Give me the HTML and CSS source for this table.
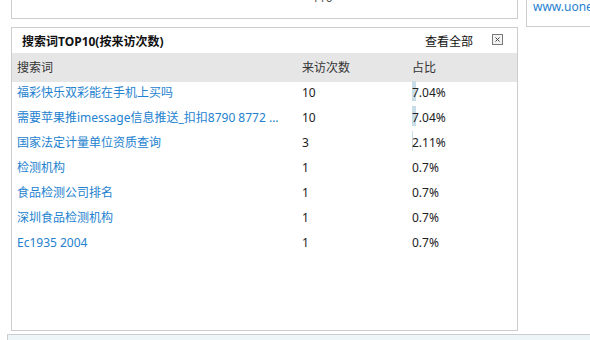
FILE: index.html
```html
<!DOCTYPE html>
<html lang="zh-CN">
<head>
<meta charset="utf-8">
<title>搜索词TOP10</title>
<link rel="stylesheet" href="styles.css">
</head>
<body>
<div class="page">
  <div class="main">
    <div class="left">
      <div class="panel top-panel">
        <div class="axis">110</div>
      </div>
      <div class="panel words">
        <div class="words-head">
          <span class="title">搜索词TOP10(按来访次数)</span>
          <span class="actions">
            <a class="more">查看全部</a>
            <svg class="close" width="11" height="11" viewBox="0 0 11 11">
              <rect x="0.5" y="0.5" width="10" height="10" fill="#f2f2f2" stroke="#7a7a7a"/>
              <path d="M3.5 3.5 L7.5 7.5 M7.5 3.5 L3.5 7.5" stroke="#444" stroke-width="1"/>
            </svg>
          </span>
        </div>
        <div class="table">
          <div class="row th">
            <div>搜索词</div><div>来访次数</div><div>占比</div>
          </div>
          <div class="row">
            <a class="kw">福彩快乐双彩能在手机上买吗</a><div>10</div>
            <div class="pct"><span class="bar" style="width:4px"></span><span class="val">7.04%</span></div>
          </div>
          <div class="row">
            <a class="kw">需要苹果推imessage信息推送_扣扣8790 8772 ...</a><div>10</div>
            <div class="pct"><span class="bar" style="width:4px"></span><span class="val">7.04%</span></div>
          </div>
          <div class="row">
            <a class="kw">国家法定计量单位资质查询</a><div>3</div>
            <div class="pct"><span class="bar" style="width:1px"></span><span class="val">2.11%</span></div>
          </div>
          <div class="row">
            <a class="kw">检测机构</a><div>1</div>
            <div class="pct"><span class="val">0.7%</span></div>
          </div>
          <div class="row">
            <a class="kw">食品检测公司排名</a><div>1</div>
            <div class="pct"><span class="val">0.7%</span></div>
          </div>
          <div class="row">
            <a class="kw">深圳食品检测机构</a><div>1</div>
            <div class="pct"><span class="val">0.7%</span></div>
          </div>
          <div class="row">
            <a class="kw">Ec1935 2004</a><div>1</div>
            <div class="pct"><span class="val">0.7%</span></div>
          </div>
        </div>
      </div>
    </div>
    <div class="panel side">
      <a class="site">www.uonet.com.cn</a>
    </div>
  </div>
  <div class="footer-bar"></div>
</div>
</body>
</html>
```

FILE: styles.css
```css
html, body {
  margin: 0;
  padding: 0;
  background: #fff;
  overflow: hidden;
}
body {
  font-family: "Noto Sans", "Noto Sans CJK SC", sans-serif;
  font-size: 12px;
  color: #222;
  width: 590px;
  height: 340px;
}
.page {
  display: flex;
  flex-direction: column;
}
.main {
  display: flex;
  gap: 8px;
  padding-left: 11px;
  margin-top: -30px;
  align-items: flex-start;
}
.left {
  width: 507px;
  display: flex;
  flex-direction: column;
  gap: 8px;
}
.panel {
  border: 1px solid #cdcdcd;
  background: #fff;
  box-sizing: border-box;
}
.top-panel {
  height: 49px;
}
.axis {
  margin-top: 19px;
  padding-left: 300px;
  line-height: 16px;
  color: #555;
}
.words {
  height: 304px;
}
.words-head {
  display: flex;
  justify-content: space-between;
  align-items: center;
  height: 25px;
  padding: 0 14px 0 10px;
}
.title {
  font-weight: bold;
  color: #111;
}
.actions {
  display: flex;
  align-items: center;
  gap: 19px;
}
.more {
  color: #111;
}
.close {
  display: block;
  margin-top: -3px;
}
.table {
  display: flex;
  flex-direction: column;
}
.row {
  display: grid;
  grid-template-columns: 285px 110px 1fr;
  padding-left: 5px;
  height: 25px;
  align-items: center;
  line-height: 16px;
}
.row > * {
  margin-top: -4px;
}
.row.th {
  background: #e6e6e6;
  height: 29px;
  color: #333;
}
.row.th > * {
  margin-top: 0;
}
.kw {
  color: #2381cf;
  white-space: nowrap;
  overflow: hidden;
}
.pct {
  position: relative;
}
.bar {
  position: absolute;
  left: 0;
  top: -4px;
  height: 20px;
  background: #c9dde9;
}
.val {
  position: relative;
}
.side {
  flex: 1;
  height: 57px;
  border-right: none;
  padding: 28px 0 0 6px;
  line-height: 16px;
  white-space: nowrap;
  overflow: hidden;
}
.site {
  color: #2381cf;
}
.footer-bar {
  margin-top: 3px;
  margin-left: 7px;
  height: 20px;
  border-top: 1px solid #cdcdcd;
  border-left: 1px solid #cdcdcd;
  background: #edf5f8;
}
```
